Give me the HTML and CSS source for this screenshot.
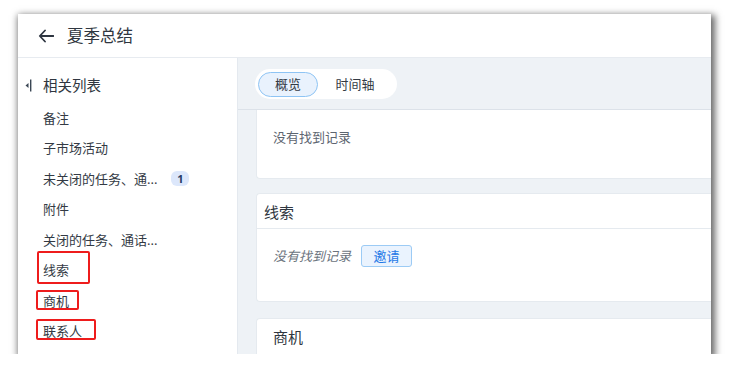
FILE: index.html
```html
<!DOCTYPE html>
<html lang="zh">
<head>
<meta charset="utf-8">
<title>夏季总结</title>
<link rel="stylesheet" href="styles.css">
</head>
<body>
<div class="page">
  <div class="frame">
    <header class="header">
      <svg class="back" width="16" height="14" viewBox="0 0 16 14"><path d="M7 1.5 L1.8 7 L7 12.5 M2 7 H15.5" fill="none" stroke="#2d3540" stroke-width="1.8" stroke-linecap="round" stroke-linejoin="round"/></svg>
      <h1 class="title">夏季总结</h1>
    </header>
    <div class="main">
      <aside class="sidebar">
        <div class="side-head">
          <svg class="collapse" width="8" height="13" viewBox="0 0 8 13"><path d="M3.5 4 L0.5 6.5 L3.5 9 Z" fill="#3a4654"/><rect x="5" y="0.5" width="1.4" height="12" fill="#3a4654"/></svg>
          <span>相关列表</span>
        </div>
        <ul class="list">
          <li class="item">备注</li>
          <li class="item">子市场活动</li>
          <li class="item">未关闭的任务、通...<span class="badge">1</span></li>
          <li class="item">附件</li>
          <li class="item">关闭的任务、通话...</li>
          <li class="item"><span class="mark mark-a">线索</span></li>
          <li class="item"><span class="mark mark-b">商机</span></li>
          <li class="item"><span class="mark mark-c">联系人</span></li>
        </ul>
      </aside>
      <section class="content">
        <div class="tabbar">
          <div class="tabs">
            <span class="tab active">概览</span>
            <span class="tab">时间轴</span>
          </div>
        </div>
        <div class="card card-first">
          <p class="empty">没有找到记录</p>
        </div>
        <div class="card card-leads">
          <div class="card-head">线索</div>
          <div class="card-body">
            <span class="empty-i">没有找到记录</span>
            <button class="invite">邀请</button>
          </div>
        </div>
        <div class="card card-opps">
          <div class="card-head pad">商机</div>
        </div>
      </section>
    </div>
  </div>
</div>
</body>
</html>
```
FILE: styles.css
```css
* { box-sizing: border-box; }
html, body { margin: 0; padding: 0; background: #ffffff; }
body {
  font-family: "Noto Sans", "Noto Sans CJK SC", sans-serif;
  color: #333a44;
}
.page { padding: 14px 18px 0 18px; }
.frame {
  width: 693px;
  height: 340px;
  background: #fff;
  overflow: hidden;
  box-shadow: 2px 3px 7px 2px rgba(0,0,0,0.6);
  display: flex;
  flex-direction: column;
}
.header {
  height: 44px;
  flex: none;
  display: flex;
  align-items: center;
  padding-left: 20px;
  gap: 13px;
  border-bottom: 1px solid #e7ebf0;
}
.back { display: block; }
.title {
  margin: 0;
  font-size: 16.5px;
  font-weight: 400;
  line-height: 20px;
  color: #2f3640;
}
.main { flex: 1; display: flex; min-height: 0; }
.sidebar {
  width: 220px;
  flex: none;
  border-right: 1px solid #e4e9ef;
  background: #fff;
}
.side-head {
  display: flex;
  align-items: center;
  padding: 18px 0 9px 7px;
  height: 45px;
  font-size: 14.5px;
  line-height: 18px;
  color: #2f3640;
}
.collapse { display: block; margin-right: 10px; }
.list { list-style: none; margin: 0; padding: 0; }
.item {
  height: 30.4px;
  line-height: 30.4px;
  padding-left: 25px;
  font-size: 13px;
  color: #333a44;
  display: flex;
  align-items: center;
}
.badge {
  display: inline-block;
  margin-left: 14px;
  width: 18px;
  height: 15px;
  line-height: 15px;
  border-radius: 6px;
  background: #dce7fb;
  color: #2a3c66;
  font-size: 11px;
  font-weight: 700;
  text-align: center;
}
.mark {
  position: relative;
  display: inline-block;
  line-height: 18px;
}
.mark::after {
  content: "";
  position: absolute;
  border: 2px solid #ee1c1c;
  border-radius: 2px;
}
.mark-a::after { left: -6px; right: -21px; top: -10px; bottom: -5px; }
.mark-b::after { left: -7px; right: -10px; top: -2px; bottom: 0; }
.mark-c::after { left: -7px; right: -14px; top: -3px; bottom: 0; }
.content {
  flex: 1;
  background: #eef2f6;
  padding-left: 17px;
  overflow: hidden;
}
.tabbar {
  height: 52px;
  padding-top: 11px;
  border-bottom: 1px solid #dce2e9;
  margin-left: -17px;
  padding-left: 17px;
}
.tabs {
  display: inline-flex;
  align-items: center;
  height: 30px;
  width: 142px;
  background: #fff;
  border-radius: 15px;
  padding-left: 3px;
}
.tab {
  font-size: 13px;
  line-height: 25px;
  height: 25px;
  text-align: center;
  color: #333a44;
}
.tab.active {
  width: 60px;
  background: #e9f2fd;
  border: 1px solid #8ec4f4;
  border-radius: 13px;
  line-height: 23px;
}
.tab:not(.active) { width: 74px; }
.card {
  background: #fff;
  margin-left: 1px;
  border-radius: 4px 0 0 4px;
  border: 1px solid #e5eaef;
  border-right: none;
}
.card-first {
  height: 69px;
  border-top: none;
  border-radius: 0 0 0 4px;
  padding: 18px 0 0 16px;
}
.empty {
  margin: 0;
  font-size: 13px;
  line-height: 18px;
  color: #5d6570;
}
.card-leads { margin-top: 14px; height: 109px; }
.card-head {
  height: 35px;
  padding: 9px 0 0 7px;
  font-size: 15px;
  line-height: 18px;
  color: #2f3640;
  border-bottom: 1px solid #e5eaef;
}
.card-head.pad { padding-left: 16px; border-bottom: none; }
.card-body {
  padding: 16px 0 0 16px;
  display: flex;
  align-items: center;
  gap: 10px;
}
.empty-i {
  font-size: 13px;
  font-style: italic;
  color: #6b737d;
  line-height: 22px;
}
.invite {
  font-family: inherit;
  width: 51px;
  height: 22px;
  padding: 0;
  font-size: 13px;
  line-height: 20px;
  color: #1e78e6;
  background: #eaf3fe;
  border: 1px solid #9ccbf5;
  border-radius: 3px;
}
.card-opps { margin-top: 16px; height: 60px; }
```
